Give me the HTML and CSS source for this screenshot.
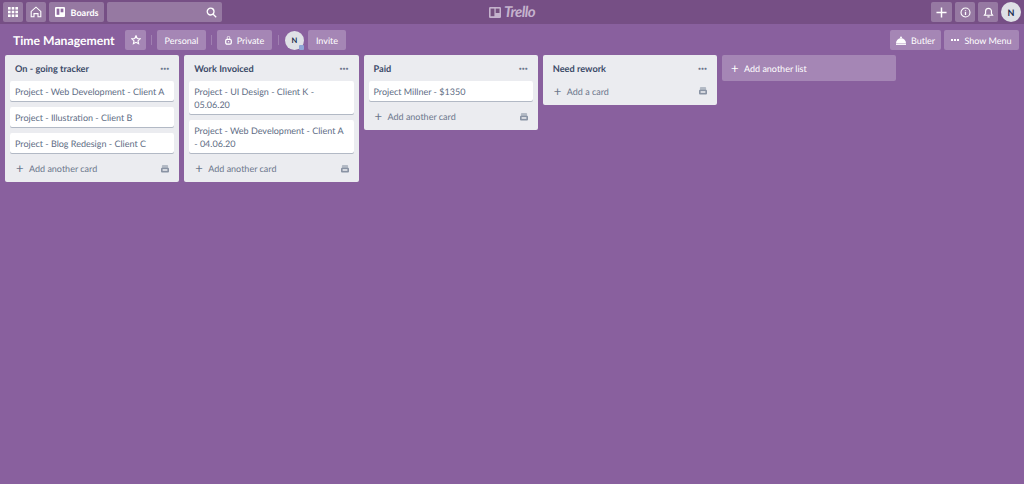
FILE: index.html
```html
<!DOCTYPE html>
<html>
<head>
	<title>Time Management | Trello</title>
	<meta charset="utf-8">
	<link rel="stylesheet" href="styles.css">
</head>
<body>
<div class="header">
	<div class="header_left">
		<a class="btn square"><svg width="10" height="10" viewBox="0 0 10 10" fill="#fff"><rect x="0" y="0" width="2.6" height="2.6"/><rect x="3.7" y="0" width="2.6" height="2.6"/><rect x="7.4" y="0" width="2.6" height="2.6"/><rect x="0" y="3.7" width="2.6" height="2.6"/><rect x="3.7" y="3.7" width="2.6" height="2.6"/><rect x="7.4" y="3.7" width="2.6" height="2.6"/><rect x="0" y="7.4" width="2.6" height="2.6"/><rect x="3.7" y="7.4" width="2.6" height="2.6"/><rect x="7.4" y="7.4" width="2.6" height="2.6"/></svg></a>
		<a class="btn square"><svg width="12" height="12" viewBox="0 0 12 12" fill="none" stroke="#fff" stroke-width="1.1"><path d="M1.2 10.8V5.4L6 1.2l4.8 4.2v5.4H8V7.6H4v3.2z"/></svg></a>
		<a class="btn boards"><svg width="10" height="10" viewBox="0 0 11 11"><rect width="11" height="11" rx="1.2" fill="#fff"/><rect x="1.8" y="1.8" width="3" height="6.8" fill="#8f6aa0"/><rect x="6.2" y="1.8" width="3" height="4" fill="#8f6aa0"/></svg><b>Boards</b></a>
		<div class="search"><svg width="11" height="11" viewBox="0 0 11 11" fill="none" stroke="#fff" stroke-width="1.3"><circle cx="4.6" cy="4.6" r="3.4"/><path d="M7.2 7.2l3 3"/></svg></div>
	</div>
	<div class="logo"><svg width="12" height="11" viewBox="0 0 12 11"><rect width="12" height="11" rx="1.2" fill="#c5b3cd"/><rect x="1.6" y="1.6" width="3.8" height="7.6" fill="#75507f"/><rect x="6.7" y="1.6" width="3.8" height="4.4" fill="#75507f"/></svg><span>Trello</span></div>
	<div class="header_right">
		<a class="btn plus"><svg width="11" height="11" viewBox="0 0 12 12" stroke="#fff" stroke-width="1.6"><path d="M6 0.5v11M0.5 6h11"/></svg></a>
		<a class="btn square"><svg width="11" height="11" viewBox="0 0 12 12" fill="none" stroke="#fff" stroke-width="1.2"><circle cx="6" cy="6" r="4.9"/><path d="M6 3.2v1M6 5.2v3.6" stroke-width="1.4"/></svg></a>
		<a class="btn square"><svg width="11" height="11" viewBox="0 0 12 12" fill="none" stroke="#fff" stroke-width="1.3"><path d="M1.6 9h8.8L9.2 7.2V4.6a3.2 3.2 0 0 0-6.4 0v2.6z"/><path d="M4.8 10.8h2.4"/></svg></a>
		<div class="avatar big">N</div>
	</div>
</div>
<div class="board_bar">
	<h1 class="board_name">Time Management</h1>
	<a class="btn star"><svg width="10" height="10" viewBox="0 0 12 12" fill="none" stroke="#fff" stroke-width="1.4"><path d="M6 1l1.5 3.2 3.5.4-2.6 2.4.7 3.5L6 8.8l-3.1 1.7.7-3.5L1 4.6l3.5-.4z"/></svg></a>
	<span class="sep"></span>
	<a class="btn bar_btn personal">Personal</a>
	<span class="sep"></span>
	<a class="btn bar_btn private"><svg width="7" height="9" viewBox="0 0 8 10" fill="none" stroke="#fff"><path d="M2.6 3.5V1.6a1.4 1.4 0 0 1 2.8 0v1.9" stroke-width="0.9"/><rect x="0.8" y="3.6" width="6.4" height="5.6" rx="1.6" stroke-width="1.4"/><circle cx="4" cy="6.4" r="0.7" fill="#fff" stroke="none"/></svg>Private</a>
	<span class="sep wide"></span>
	<div class="avatar small">N<i class="badge"></i></div>
	<a class="btn bar_btn invite">Invite</a>
	<div class="bar_right">
		<a class="btn bar_btn butler"><svg width="10" height="9" viewBox="0 0 10 9" fill="#fff"><path d="M0 7.2a5 5 0 0 1 10 0z"/><circle cx="5" cy="1.4" r="1"/><rect y="7.6" width="10" height="1.3"/></svg>Butler</a>
		<a class="btn bar_btn menu"><svg width="8" height="2" viewBox="0 0 8 2" fill="#fff"><rect width="2" height="2"/><rect x="3" width="2" height="2"/><rect x="6" width="2" height="2"/></svg>Show Menu</a>
	</div>
</div>
<div class="lists">
	<div class="list">
		<div class="list_head"><span>On - going tracker</span><em>···</em></div>
		<div class="card">Project - Web Development - Client A</div>
		<div class="card">Project - Illustration - Client B</div>
		<div class="card">Project - Blog Redesign - Client C</div>
		<div class="list_foot"><i class="add">+</i><span>Add another card</span><svg class="tpl" width="8" height="8" viewBox="0 0 9 9"><rect x="1" y="0" width="7" height="7" rx="1" fill="#b3bac5"/><rect x="0" y="3" width="9" height="5.5" rx="1.2" fill="#8993a4"/><rect x="1.8" y="4.6" width="5.4" height="2" fill="#dfe1e6"/></svg></div>
	</div>
	<div class="list">
		<div class="list_head"><span>Work Invoiced</span><em>···</em></div>
		<div class="card">Project - UI Design - Client K - 05.06.20</div>
		<div class="card">Project - Web Development - Client A - 04.06.20</div>
		<div class="list_foot"><i class="add">+</i><span>Add another card</span><svg class="tpl" width="8" height="8" viewBox="0 0 9 9"><rect x="1" y="0" width="7" height="7" rx="1" fill="#b3bac5"/><rect x="0" y="3" width="9" height="5.5" rx="1.2" fill="#8993a4"/><rect x="1.8" y="4.6" width="5.4" height="2" fill="#dfe1e6"/></svg></div>
	</div>
	<div class="list">
		<div class="list_head"><span>Paid</span><em>···</em></div>
		<div class="card">Project Millner - $1350</div>
		<div class="list_foot"><i class="add">+</i><span>Add another card</span><svg class="tpl" width="8" height="8" viewBox="0 0 9 9"><rect x="1" y="0" width="7" height="7" rx="1" fill="#b3bac5"/><rect x="0" y="3" width="9" height="5.5" rx="1.2" fill="#8993a4"/><rect x="1.8" y="4.6" width="5.4" height="2" fill="#dfe1e6"/></svg></div>
	</div>
	<div class="list">
		<div class="list_head"><span>Need rework</span><em>···</em></div>
		<div class="list_foot first"><i class="add">+</i><span>Add a card</span><svg class="tpl" width="8" height="8" viewBox="0 0 9 9"><rect x="1" y="0" width="7" height="7" rx="1" fill="#b3bac5"/><rect x="0" y="3" width="9" height="5.5" rx="1.2" fill="#8993a4"/><rect x="1.8" y="4.6" width="5.4" height="2" fill="#dfe1e6"/></svg></div>
	</div>
	<div class="add_list"><i class="add">+</i><span>Add another list</span></div>
</div>
</body>
</html>
```

FILE: styles.css
```css
*{
	margin: 0px;
	padding: 0px;
	box-sizing: border-box;
}
body{
	width: 1024px;
	height: 484px;
	overflow: hidden;
	background-color: #89609e;
	font-family: "Lato", "Noto Sans", sans-serif;
	font-size: 9px;
	text-rendering: geometricPrecision;
	color: #172b4d;
}
.btn{
	display: flex;
	align-items: center;
	justify-content: center;
	height: 20px;
	border-radius: 2px;
	background-color: rgba(255,255,255,0.24);
	color: #fff;
}
.header{
	display: grid;
	grid-template-columns: 1fr auto 1fr;
	align-items: center;
	height: 24px;
	padding: 0 3px;
	background-color: #764f85;
}
.header_left, .header_right{
	display: flex;
	align-items: center;
	gap: 3px;
}
.header_right{
	justify-content: flex-end;
}
.square{
	width: 20px;
}
.plus{
	width: 21px;
}
.boards{
	width: 55px;
	gap: 6px;
}
.boards b{
	font-size: 9px;
	font-weight: 700;
}
.search{
	display: flex;
	align-items: center;
	justify-content: flex-end;
	width: 115px;
	height: 20px;
	padding-right: 5px;
	border-radius: 2px;
	background-color: rgba(255,255,255,0.24);
}
.logo{
	display: flex;
	align-items: center;
	gap: 3px;
	color: #c5b3cd;
}
.logo span{
	font-style: italic;
	font-weight: 700;
	font-size: 15px;
	line-height: 16px;
	letter-spacing: -0.6px;
}
.avatar{
	display: flex;
	align-items: center;
	justify-content: center;
	border-radius: 50%;
	background-color: #dfe1e6;
	color: #172b4d;
	font-weight: 700;
}
.big{
	width: 20px;
	height: 20px;
	font-size: 9px;
}
.small{
	position: relative;
	width: 19px;
	height: 19px;
	margin-right: 4px;
	font-size: 7.5px;
}
.badge{
	position: absolute;
	right: 0;
	bottom: 0;
	width: 5px;
	height: 5px;
	border-radius: 1px;
	background-color: #8fa5d6;
}
.board_bar{
	display: flex;
	align-items: center;
	height: 31px;
	padding: 1px 5px 0 13px;
}
.board_name{
	width: 112px;
	font-size: 12.2px;
	font-weight: 700;
	color: #fff;
	white-space: nowrap;
}
.star{
	width: 21px;
}
.sep{
	width: 1px;
	height: 10px;
	margin: 0 5px;
	background-color: rgba(255,255,255,0.2);
}
.sep.wide{
	margin: 0 6px;
}
.bar_btn{
	gap: 5px;
}
.personal{
	width: 49px;
}
.invite{
	width: 38px;
}
.private{
	width: 55px;
}
.bar_right{
	display: flex;
	gap: 3px;
	margin-left: auto;
}
.butler{
	width: 51px;
}
.menu{
	width: 75px;
}
.lists{
	display: flex;
	align-items: flex-start;
	gap: 5px;
	padding: 0 5px;
}
.list{
	display: flex;
	flex-direction: column;
	width: 174.25px;
	padding: 0 5px;
	border-radius: 2px;
	background-color: #ebecf0;
}
.list_head{
	display: flex;
	align-items: center;
	justify-content: space-between;
	height: 26px;
	padding: 0 5px;
	font-size: 9.2px;
	font-weight: 700;
	color: #3b4a68;
}
.list_head em{
	font-style: normal;
	font-size: 11px;
	font-weight: 700;
	color: #6b778c;
}
.card{
	margin-bottom: 6px;
	padding: 3.5px 5px;
	border-radius: 2px;
	background-color: #fff;
	box-shadow: 0 1px 0 rgba(9,30,66,0.25);
	line-height: 13px;
	color: #5e6c84;
}
.list_foot{
	display: flex;
	align-items: center;
	height: 19px;
	margin-bottom: 4px;
	padding: 0 2px 0 6px;
	color: #6b778c;
}
.list_foot.first{
	height: 20px;
}
.add{
	width: 10px;
	margin-right: 3px;
	font-style: normal;
	font-size: 13px;
	line-height: 13px;
}
.tpl{
	margin-left: auto;
	margin-right: 3px;
}
.add_list{
	display: flex;
	align-items: center;
	width: 174px;
	height: 26px;
	padding: 0 9px;
	border-radius: 2px;
	background-color: rgba(255,255,255,0.24);
	color: #fff;
}
```
